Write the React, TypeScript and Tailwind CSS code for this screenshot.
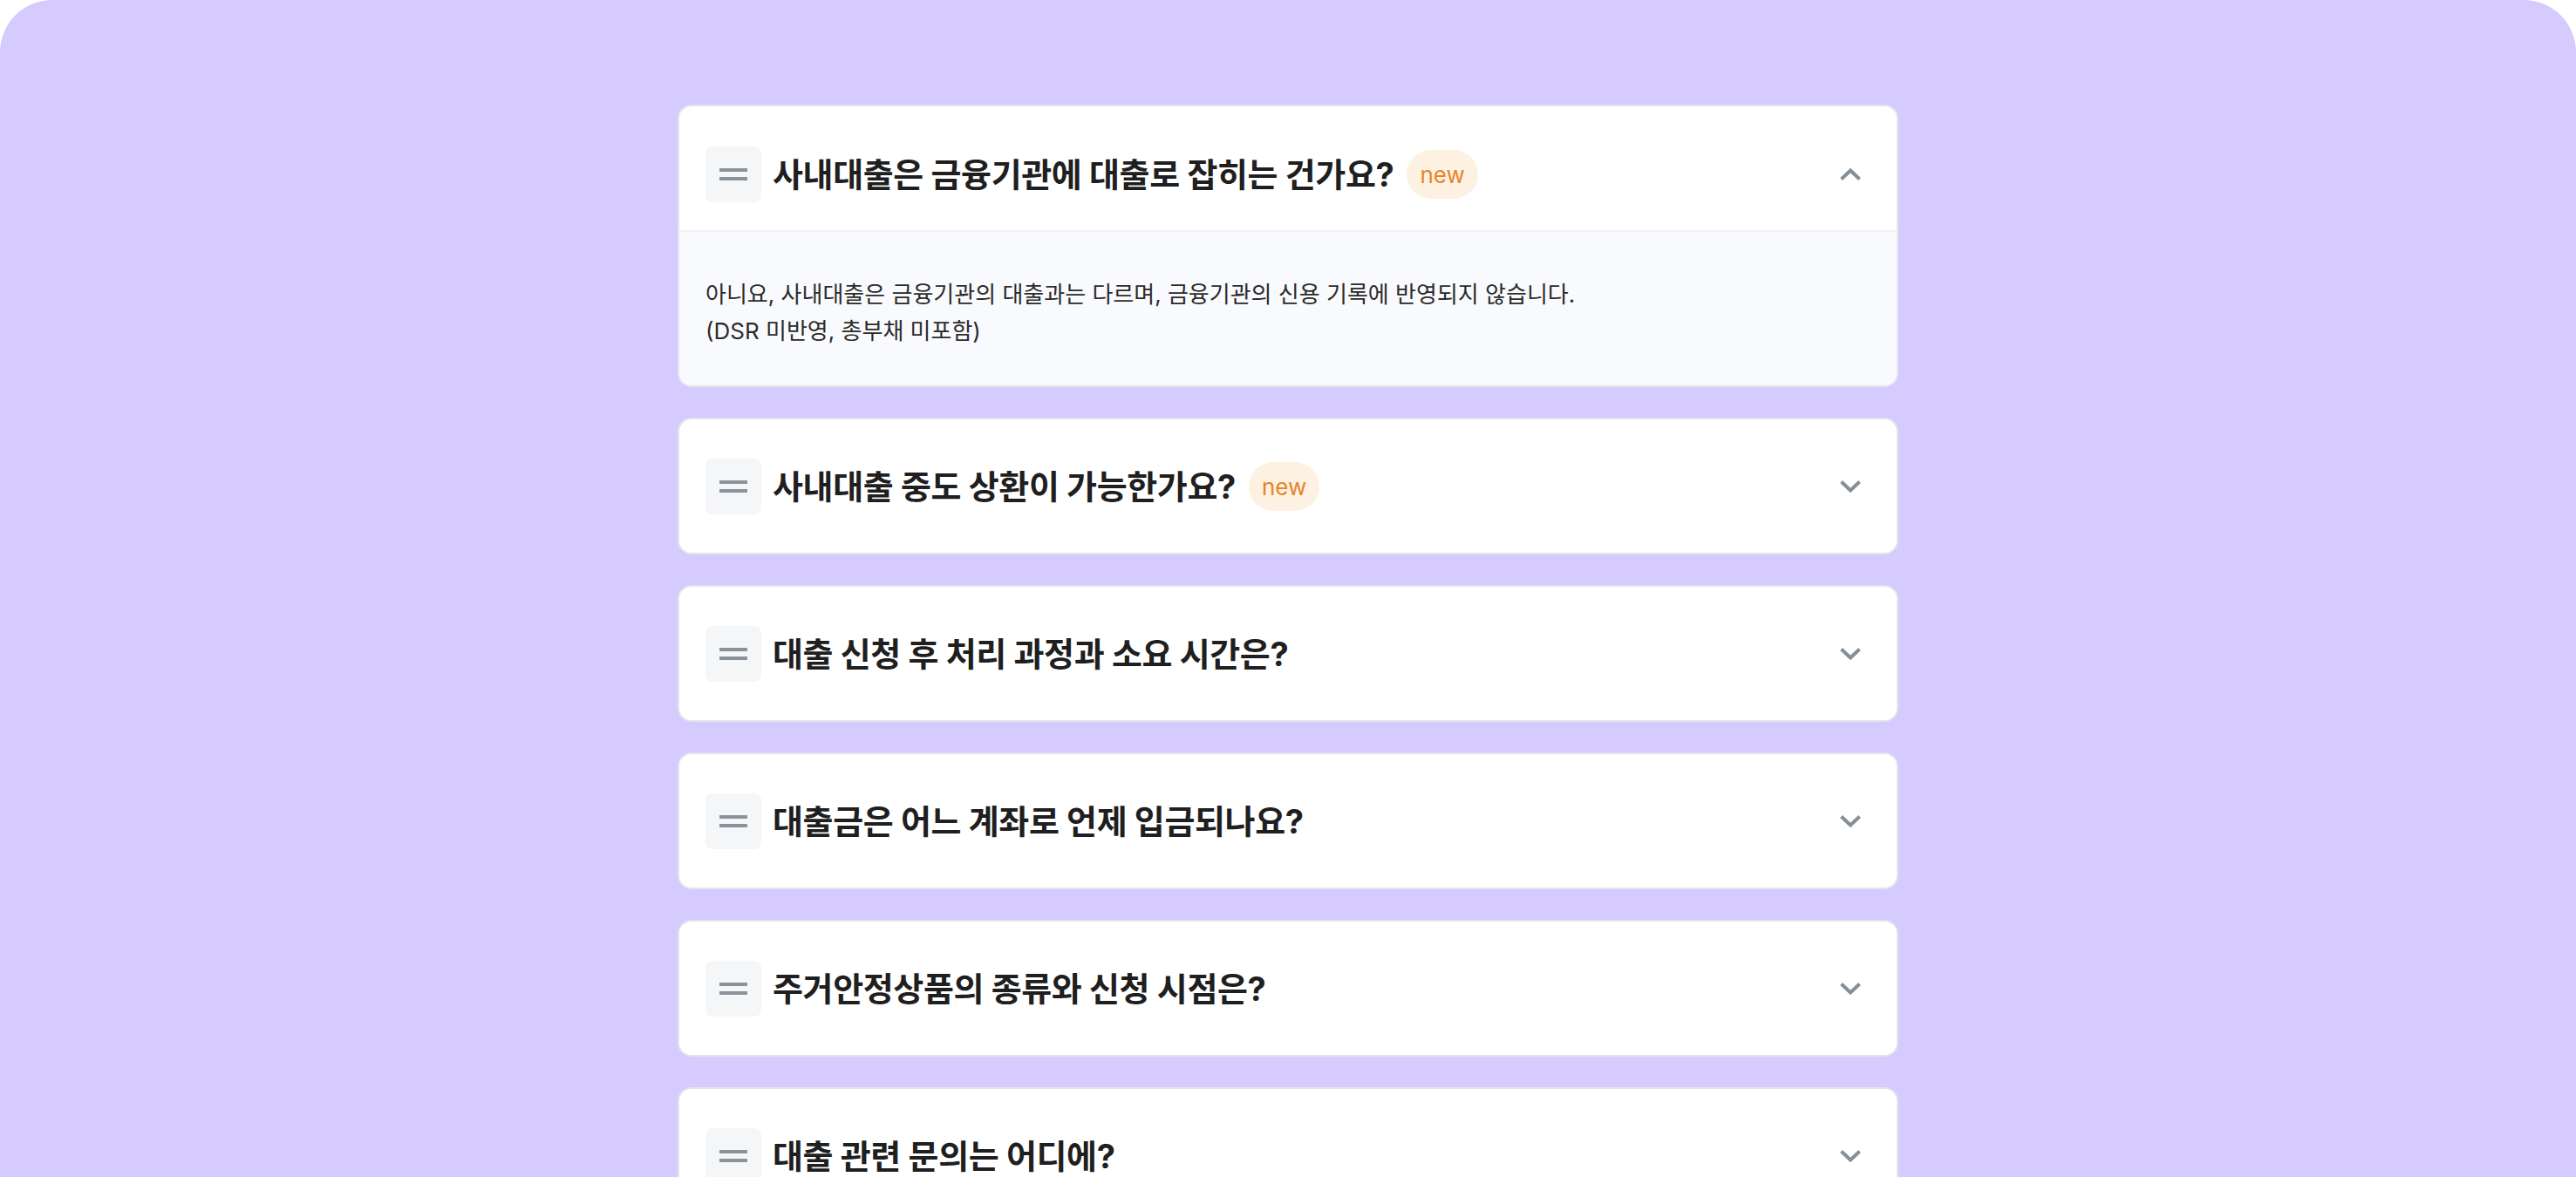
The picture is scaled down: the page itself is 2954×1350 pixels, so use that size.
import { useState } from "react";

type Faq = {
  id: number;
  question: string;
  answer?: string[];
  isNew?: boolean;
};

const faqs: Faq[] = [
  {
    id: 1,
    question: "사내대출은 금융기관에 대출로 잡히는 건가요?",
    answer: [
      "아니요, 사내대출은 금융기관의 대출과는 다르며, 금융기관의 신용 기록에 반영되지 않습니다.",
      "(DSR 미반영, 총부채 미포함)",
    ],
    isNew: true,
  },
  { id: 2, question: "사내대출 중도 상환이 가능한가요?", isNew: true },
  { id: 3, question: "대출 신청 후 처리 과정과 소요 시간은?" },
  { id: 4, question: "대출금은 어느 계좌로 언제 입금되나요?" },
  { id: 5, question: "주거안정상품의 종류와 신청 시점은?" },
  { id: 6, question: "대출 관련 문의는 어디에?" },
];

function DragHandle() {
  return (
    <div className="flex h-16 w-16 shrink-0 flex-col items-center justify-center gap-[6px] rounded-lg bg-[#f5f6f8]">
      <span className="block h-1 w-8 bg-[#8a939b]" />
      <span className="block h-1 w-8 bg-[#8a939b]" />
    </div>
  );
}

function Chevron({ open }: { open: boolean }) {
  return (
    <svg
      width="24"
      height="14"
      viewBox="0 0 24 14"
      fill="none"
      className={open ? "" : "rotate-180"}
    >
      <polyline
        points="1.5,12.5 12,2.5 22.5,12.5"
        stroke="#868e96"
        strokeWidth="4"
        strokeLinejoin="miter"
      />
    </svg>
  );
}

function FaqItem({
  faq,
  open,
  onToggle,
}: {
  faq: Faq;
  open: boolean;
  onToggle: () => void;
}) {
  return (
    <div className="w-[1400px] overflow-hidden rounded-2xl border-2 border-[#e3e4ec] bg-white">
      {/* Question row */}
      <button
        type="button"
        onClick={onToggle}
        className={`flex w-full items-center pl-[30px] pr-[41px] text-left ${
          open ? "border-b-2 border-[#f0f1f5] pt-[46px] pb-[32px]" : "pt-[45px] pb-[44px]"
        }`}
      >
        <DragHandle />
        <span className="ml-[13px] text-[38px] leading-[52px] font-bold tracking-[-0.01em] text-[#1f1f1f]">
          {faq.question}
        </span>
        {faq.isNew && (
          <span className="ml-[15px] flex h-14 items-center rounded-full bg-[#fdf2e2] px-[15px] text-[26px] text-[#e8832a]">
            new
          </span>
        )}
        <span className="ml-auto flex items-center">
          <Chevron open={open} />
        </span>
      </button>

      {/* Answer */}
      {open && faq.answer && (
        <div className="bg-[#f9fafd] px-[30px] pt-[51px] pb-[41px] text-[26px] leading-[42px] text-[#2b2b2b]">
          {faq.answer.map((line) => (
            <p key={line}>{line}</p>
          ))}
        </div>
      )}
    </div>
  );
}

export default function App() {
  const [openId, setOpenId] = useState<number | null>(1);

  return (
    <div className="min-h-screen bg-white font-[Inter,'Noto_Sans_CJK_KR',sans-serif]">
      <div className="flex flex-col items-center gap-[35px] rounded-[60px] bg-[#d5cbff] pt-[120px] pb-[120px]">
        {faqs.map((faq) => (
          <FaqItem
            key={faq.id}
            faq={faq}
            open={openId === faq.id}
            onToggle={() => setOpenId(openId === faq.id ? null : faq.id)}
          />
        ))}
      </div>
    </div>
  );
}
